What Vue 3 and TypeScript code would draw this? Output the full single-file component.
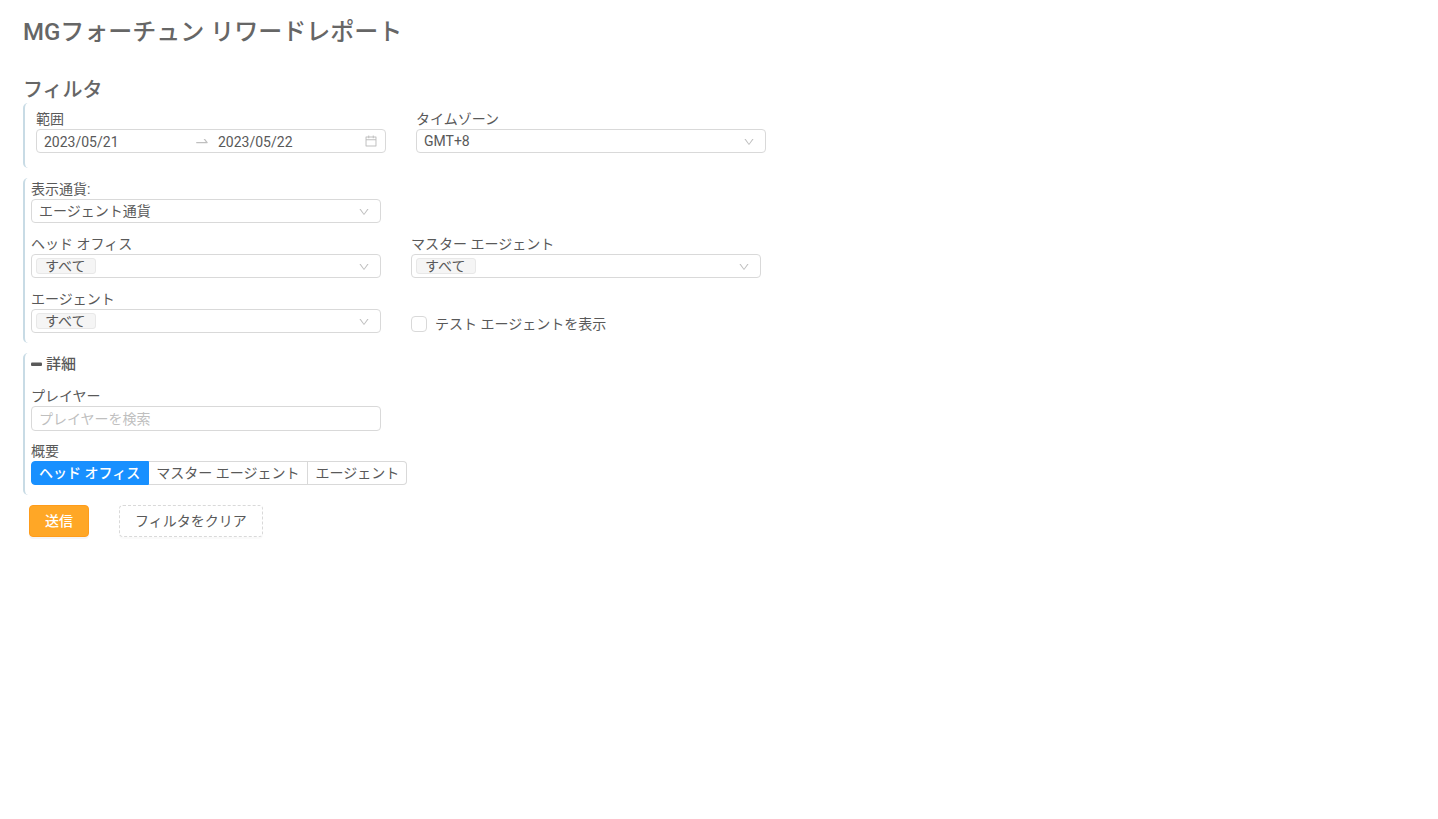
<script setup lang="ts">
import { ref } from 'vue'

type Level = 'head' | 'master' | 'agent'

const DOWN_PATH =
  'M884 256h-75c-5.1 0-9.9 2.5-12.9 6.6L512 654.2 227.9 262.6c-3-4.1-7.8-6.6-12.9-6.6h-75c-6.5 0-10.3 7.4-6.5 12.7l352.6 486.1c12.8 17.6 39 17.6 51.7 0l352.6-486.1c3.9-5.3.1-12.7-6.4-12.7z'

const startDate = ref('2023/05/21')
const endDate = ref('2023/05/22')
const timezone = ref('GMT+8')
const currency = ref('agent')
const showTest = ref(false)
const detailsOpen = ref(true)
const player = ref('')
const summary = ref<Level>('head')

const levels: { value: Level; label: string }[] = [
  { value: 'head', label: 'ヘッド オフィス' },
  { value: 'master', label: 'マスター エージェント' },
  { value: 'agent', label: 'エージェント' },
]

function clearFilters() {
  currency.value = 'agent'
  showTest.value = false
  player.value = ''
  summary.value = 'head'
}
</script>

<template>
  <main class="page">
    <h1 class="title">MGフォーチュン リワードレポート</h1>
    <h2 class="subtitle">フィルタ</h2>

    <form @submit.prevent>
      <section class="group group-range">
        <div class="row">
          <div class="field">
            <label class="label" for="start-date">範囲</label>
            <div class="control range">
              <input id="start-date" v-model="startDate" class="date" type="text" />
              <svg class="swap" viewBox="0 0 1024 1024" aria-hidden="true">
                <path d="M873.1 596.2l-164-208A32 32 0 00684 376h-64.8c-6.7 0-10.4 7.7-6.3 13l144.3 183H152c-4.4 0-8 3.6-8 8v60c0 4.4 3.6 8 8 8h695.9c26.8 0 41.7-30.8 25.2-51.8z" />
              </svg>
              <input v-model="endDate" class="date" type="text" aria-label="終了日" />
              <svg class="calendar" viewBox="0 0 1024 1024" aria-hidden="true">
                <path d="M880 184H712v-64c0-4.4-3.6-8-8-8h-56c-4.4 0-8 3.6-8 8v64H384v-64c0-4.4-3.6-8-8-8h-56c-4.4 0-8 3.6-8 8v64H144c-17.7 0-32 14.3-32 32v664c0 17.7 14.3 32 32 32h736c17.7 0 32-14.3 32-32V216c0-17.7-14.3-32-32-32zm-40 656H184V460h656v380zM184 392V256h128v48c0 4.4 3.6 8 8 8h56c4.4 0 8-3.6 8-8v-48h256v48c0 4.4 3.6 8 8 8h56c4.4 0 8-3.6 8-8v-48h128v136H184z" />
              </svg>
            </div>
          </div>
          <div class="field">
            <label class="label" for="timezone">タイムゾーン</label>
            <div class="control">
              <select id="timezone" v-model="timezone" class="select">
                <option value="GMT+8">GMT+8</option>
              </select>
              <svg class="arrow" viewBox="0 0 1024 1024" aria-hidden="true"><path :d="DOWN_PATH" /></svg>
            </div>
          </div>
        </div>
      </section>

      <section class="group">
        <div class="row">
          <div class="field">
            <label class="label" for="currency">表示通貨:</label>
            <div class="control">
              <select id="currency" v-model="currency" class="select">
                <option value="agent">エージェント通貨</option>
              </select>
              <svg class="arrow" viewBox="0 0 1024 1024" aria-hidden="true"><path :d="DOWN_PATH" /></svg>
            </div>
          </div>
        </div>
        <div class="row">
          <div class="field">
            <label class="label" for="head-office">ヘッド オフィス</label>
            <div class="control tagged">
              <select id="head-office" class="select">
                <option>すべて</option>
              </select>
              <svg class="arrow" viewBox="0 0 1024 1024" aria-hidden="true"><path :d="DOWN_PATH" /></svg>
            </div>
          </div>
          <div class="field">
            <label class="label" for="master-agent">マスター エージェント</label>
            <div class="control tagged">
              <select id="master-agent" class="select">
                <option>すべて</option>
              </select>
              <svg class="arrow" viewBox="0 0 1024 1024" aria-hidden="true"><path :d="DOWN_PATH" /></svg>
            </div>
          </div>
        </div>
        <div class="row">
          <div class="field">
            <label class="label" for="agent">エージェント</label>
            <div class="control tagged">
              <select id="agent" class="select">
                <option>すべて</option>
              </select>
              <svg class="arrow" viewBox="0 0 1024 1024" aria-hidden="true"><path :d="DOWN_PATH" /></svg>
            </div>
          </div>
          <label class="check">
            <input v-model="showTest" type="checkbox" />
            <span>テスト エージェントを表示</span>
          </label>
        </div>
      </section>

      <section class="group">
        <button class="toggle" type="button" :aria-expanded="detailsOpen" @click="detailsOpen = !detailsOpen">
          <svg class="minus" viewBox="0 0 11 11" aria-hidden="true">
            <rect x="0" y="3.5" width="11" height="3.5" rx="1" />
            <rect v-if="!detailsOpen" x="4" y="0" width="3" height="11" rx="1" />
          </svg>
          <span>詳細</span>
        </button>
        <template v-if="detailsOpen">
          <div class="row">
            <div class="field">
              <label class="label" for="player">プレイヤー</label>
              <input id="player" v-model="player" class="text" type="text" placeholder="プレイヤーを検索" />
            </div>
          </div>
          <fieldset class="summary">
            <legend class="label">概要</legend>
            <div class="segments">
              <label v-for="l in levels" :key="l.value" class="segment" :class="{ active: summary === l.value }">
                <input v-model="summary" type="radio" name="summary" :value="l.value" />
                <span>{{ l.label }}</span>
              </label>
            </div>
          </fieldset>
        </template>
      </section>

      <div class="actions">
        <button class="btn primary" type="submit">送信</button>
        <button class="btn dashed" type="button" @click="clearFilters">フィルタをクリア</button>
      </div>
    </form>
  </main>
</template>

<style>
body {
  background: #fff;
}
</style>

<style scoped>
.page,
.page *,
.page *::before {
  box-sizing: border-box;
}
.page {
  padding: 12px 23px 24px;
  color: #595959;
  font-family: Roboto, "Noto Sans CJK JP", sans-serif;
  font-size: 14px;
  line-height: 20px;
}
.page input,
.page select,
.page button {
  margin: 0;
  color: inherit;
  font-family: inherit;
  font-size: inherit;
}
.title {
  margin: 0 0 26px;
  color: #666;
  font-size: 24px;
  font-weight: 500;
  line-height: 40px;
}
.subtitle {
  margin: 0;
  color: #666;
  font-size: 20px;
  font-weight: 500;
  line-height: 25px;
}
form {
  display: flex;
  flex-direction: column;
  gap: 10px;
}
.group {
  display: flex;
  flex-direction: column;
  gap: 11px;
  padding: 1px 0 10px 6px;
  border-left: 2px solid #c8dbe5;
  border-radius: 5px;
}
.group-range {
  padding: 6px 0 15px 11px;
}
.row {
  display: flex;
  flex-wrap: wrap;
  gap: 11px 30px;
}
.field {
  flex: 0 1 350px;
  min-width: 0;
}
.label {
  display: block;
  padding: 0;
  line-height: 20px;
}
.control {
  position: relative;
  height: 24px;
  border: 1px solid #d9d9d9;
  border-radius: 4px;
}
.range {
  display: flex;
  align-items: center;
  padding: 0 7px;
}
.date {
  flex: 1 1 0;
  min-width: 0;
  height: 22px;
  padding: 2px 0 0;
  border: 0;
  background: transparent;
}
.swap {
  flex: none;
  width: 16px;
  height: 16px;
  margin: 0 8px;
  fill: #bfbfbf;
}
.calendar {
  flex: none;
  width: 14px;
  height: 14px;
  margin-left: 4px;
  fill: #bfbfbf;
}
.select {
  position: relative;
  display: block;
  width: 100%;
  height: 22px;
  padding: 0 24px 0 7px;
  border: 0;
  border-radius: 4px;
  background: transparent;
  appearance: none;
}
.arrow {
  position: absolute;
  top: 6px;
  right: 10px;
  width: 12px;
  height: 12px;
  fill: #bfbfbf;
  pointer-events: none;
}
.tagged::before {
  content: "";
  position: absolute;
  top: 3px;
  left: 4px;
  width: 60px;
  height: 16px;
  border: 1px solid #e8e8e8;
  border-radius: 3px;
  background: #f5f5f5;
}
.tagged .select {
  padding-left: 13px;
}
.check {
  display: flex;
  align-items: center;
  align-self: flex-end;
  gap: 8px;
  height: 18px;
}
.check input {
  width: 16px;
  height: 16px;
  border: 1px solid #d9d9d9;
  border-radius: 4px;
  background: #fff;
  appearance: none;
}
.check input:checked {
  border-color: #1890ff;
  background: #1890ff;
}
.toggle {
  display: flex;
  align-items: center;
  align-self: flex-start;
  gap: 4px;
  padding: 0;
  border: 0;
  background: none;
  font-weight: 500;
  line-height: 21px;
}
.toggle span {
  font-size: 15px;
}
.minus {
  width: 11px;
  height: 11px;
  fill: #595959;
}
.text {
  display: block;
  width: 100%;
  height: 25px;
  padding: 0 7px;
  border: 1px solid #d9d9d9;
  border-radius: 4px;
  background: #fff;
}
.text::placeholder {
  color: #bfbfbf;
}
.summary {
  margin: -1px 0 0;
  padding: 0;
  border: 0;
}
.segments {
  display: flex;
  flex-wrap: wrap;
}
.segment {
  position: relative;
  height: 24px;
  padding: 0 8px 0 7px;
  border: 1px solid #d9d9d9;
  border-left-width: 0;
  line-height: 22px;
  cursor: pointer;
}
.segment:first-child {
  border-left-width: 1px;
  border-radius: 4px 0 0 4px;
}
.segment:last-child {
  padding-right: 7px;
  border-radius: 0 4px 4px 0;
}
.segment input {
  position: absolute;
  inset: 0;
  opacity: 0;
}
.segment.active {
  border-color: #1890ff;
  background: #1890ff;
  color: #fff;
  font-weight: 500;
}
.actions {
  display: flex;
  gap: 30px;
  padding-left: 6px;
}
.btn {
  height: 32px;
  padding: 0 15px;
  border: 1px solid #d9d9d9;
  border-radius: 4px;
  line-height: 30px;
  cursor: pointer;
}
.btn.primary {
  border-color: #ff9c1a;
  background: #ffa726;
  box-shadow: 0 2px 0 rgba(0, 0, 0, 0.04);
  color: #fff;
  font-weight: 500;
}
.btn.dashed {
  border-style: dashed;
  background: #fff;
  box-shadow: 0 2px 0 rgba(0, 0, 0, 0.02);
}
</style>
